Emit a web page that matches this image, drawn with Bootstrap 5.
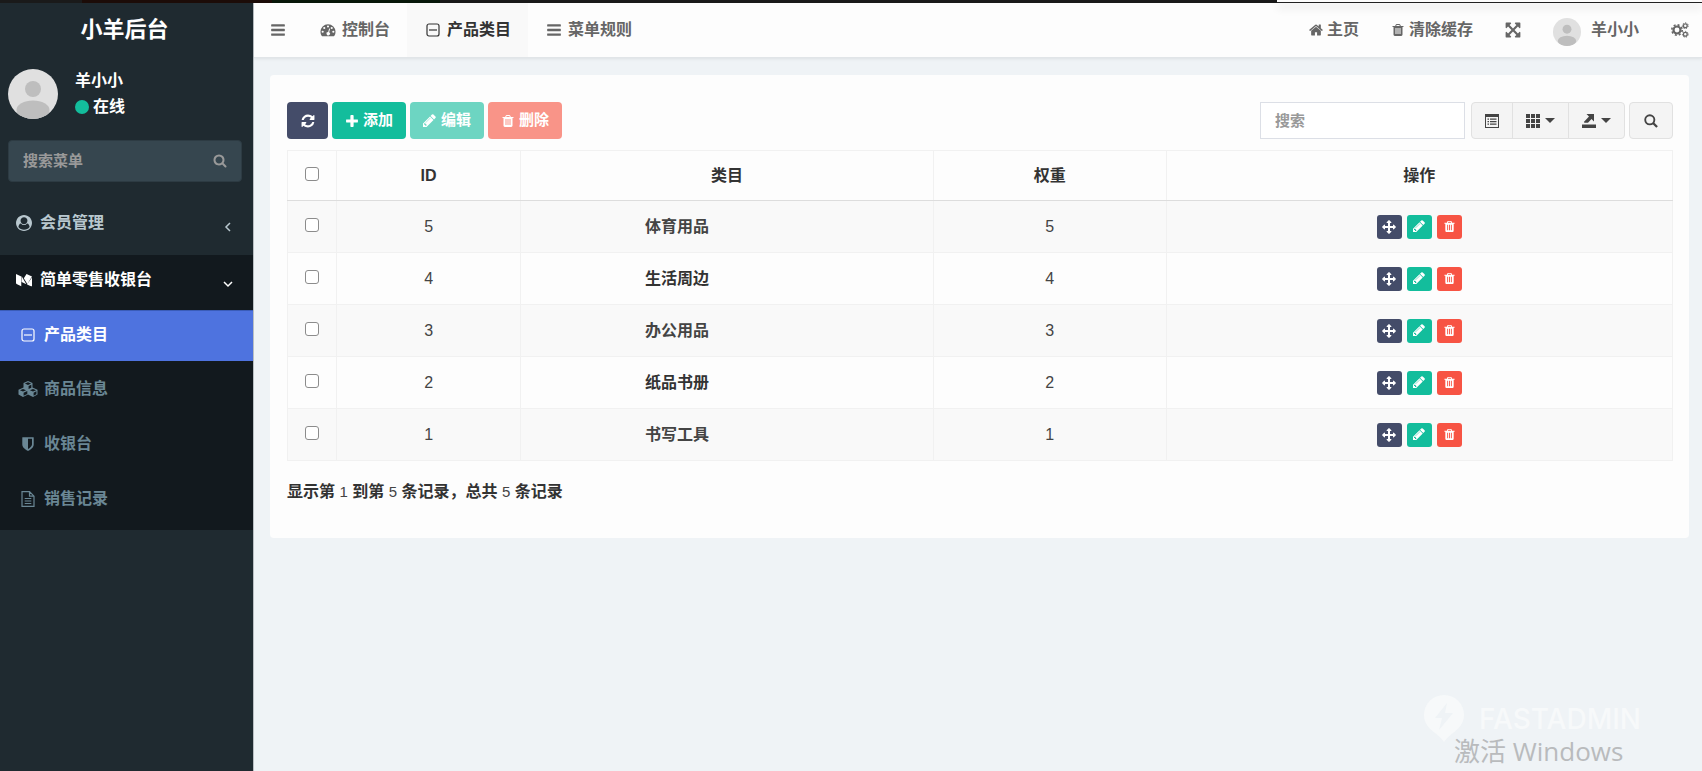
<!DOCTYPE html>
<html lang="zh-CN">
<head>
<meta charset="utf-8">
<meta name="viewport" content="width=device-width, initial-scale=1">
<title>小羊后台</title>
<link href="https://cdn.jsdelivr.net/npm/bootstrap@5.3.0/dist/css/bootstrap.min.css" rel="stylesheet">
<style>
  body { font-family: "Liberation Sans", "Noto Sans CJK SC", sans-serif; font-size: 16px; line-height: 24px; background: #eff3f6; color: #333; }
  a { text-decoration: none; color: inherit; }
  .ico { width: 16px; height: 16px; fill: currentColor; flex: none; }
  .ico-sm { width: 14px; height: 14px; }

  .window-edge { height: 3px; background: linear-gradient(90deg, #1a1a1a 82px, #1c0c08 82px 272px, #08180a 272px 440px, #1a1a1a 440px); }
  .window-edge > div { width: 25%; background: #fdfdfd; border-bottom: 1px solid #222; box-shadow: 0 5px 8px rgba(0,0,0,.12); position: relative; }

  .sidebar { width: 254px; background: #1f2a30; border-right: 1px solid #b9bfc3; font-weight: 700; color: #fff; }
  .brand { height: 54px; font-size: 22px; }
  .user-panel { padding: 12px 8px; gap: 17px; }
  .user-panel svg { width: 50px; height: 50px; border-radius: 50%; }
  .status { gap: 4px; margin-top: 2px; }
  .status-dot { width: 14px; height: 14px; border-radius: 50%; background: #13bd9c; }
  .menu-search { margin: 9px 11px 9px 8px; height: 42px; background: #36464f; border: 1px solid #2d3b43; border-radius: 4px; color: #999; padding-right: 14px; }
  .menu-search input { font-size: 15px; font-weight: 700; color: #ccc; padding: 0 14px; background: none; }
  .menu-search input::placeholder, .table-search::placeholder { color: #999; opacity: 1; }
  .menu-search button, .plain-btn { background: none; border: 0; padding: 0; color: inherit; display: flex; }
  .menu-top { height: 64px; padding: 0 18px 0 16px; gap: 8px; color: #b8c7ce; }
  .menu-open { background: #12191e; padding-bottom: 4px; }
  .menu-open .menu-top { height: 55px; color: #fff; padding-bottom: 5px; }
  .chevron { width: 14px; height: 14px; margin-top: 8px; }
  .menu-sub { height: 55px; padding: 0 20px 0 18px; gap: 6px; color: #6a8795; }
  .menu-sub .ico { width: 20px; }
  .menu-sub.active { height: 51px; background: #4e73df; color: #fff; border-top: 1px solid #3a5cb8; padding-bottom: 2px; }

  .topbar { height: 55px; background: #fdfdfd; border-bottom: 1px solid #e1e5e8; box-shadow: 0 1px 3px rgba(0,0,0,.08); color: #666; font-weight: 700; }
  .top-item { padding: 0 16px; gap: 4px; height: 54px; }
  .top-toggle { padding: 0 16px; }
  .top-tab { padding: 0 17px 0 18px; gap: 6px; }
  .top-tab.active { background: #f9f9f9; color: #333; }
  .top-avatar { width: 28px; height: 28px; margin: 3px 6px 0 0; border-radius: 50%; }
  .top-end { padding-right: 13px; }
  .ico-wide { width: 18px; }

  .panel { margin: 17px 13px 0 16px; padding: 27px 16px 34px 17px; background: #fdfdfd; border-radius: 4px; }
  .tools { gap: 4px; }
  .tool { height: 37px; padding: 0 13px; gap: 4px; font-size: 15px; font-weight: 700; color: #fff; border: 0; border-radius: 4px; display: flex; align-items: center; }
  .tool:hover { color: #fff; }
  .tool:disabled { color: #fff; opacity: 1; }
  .tool-icon { width: 41px; justify-content: center; }
  .tone-navy { background: #444c69; } .tone-green { background: #13bd9c; } .tone-red { background: #f75444; }
  .tone-green:disabled { background: #6dd5c2; } .tone-red:disabled { background: #f99488; }
  .table-search { width: 205px; height: 37px; border: 1px solid #dcdfe6; border-radius: 0; font-size: 15px; font-weight: 700; padding: 0 14px; background: #fff; margin-right: 2px; }
  .tool-grey { height: 37px; padding: 0 13px; background: #f4f4f4; border: 1px solid #e1e1e1; color: #444; border-radius: 4px; display: flex; align-items: center; gap: 5px; }
  .tool-find { padding: 0 14px; }
  .caret { border: 5px solid transparent; border-top-color: #444; border-bottom: 0; width: 0; }

  .data-table { margin: 11px 0 0; table-layout: fixed; border-color: #f1f1f1; text-align: center; color: #444; --bs-table-bg: transparent; --bs-table-striped-bg: #f9f9f9; --bs-table-striped-color: #444; --bs-table-color: #444; }
  .data-table > :not(caption) > * > * { padding: 0; vertical-align: middle; border-color: #f1f1f1; height: 52px; }
  .data-table > thead > tr > * { height: 50px; color: #333; border-bottom: 1px solid #ddd; }
  .data-table > tbody .name { font-weight: 700; color: #333; padding-right: 100px; }
  .c-check { width: 49px; } .c-id { width: 13.3%; } .c-name { width: 29.8%; } .c-weight { width: 16.8%; }
  .row-check { width: 14px; height: 14px; display: block; margin: 0 auto 4px; appearance: none; border: 1px solid #8c8c8c; border-radius: 3px; background: #fff; }
  .row-check:checked { background: #4e73df; }
  .row-tools { gap: 5px; }
  .row-tools button { width: 25px; height: 24px; padding: 0; border: 0; border-radius: 3px; color: #fff; display: flex; align-items: center; justify-content: center; }
  .row-tools .ico { width: 13px; height: 13px; }
  .row-tools .tone-navy .ico { width: 14px; height: 14px; }
  .summary { margin: 19px 0 0; font-weight: 700; }
  .summary span { font-weight: 400; font-size: 15px; color: #444; }

  .watermarks { right: 0; bottom: 6px; width: 290px; pointer-events: none; }
  .mark-logo { color: #f7f9fa; font-family: Inter, sans-serif; font-weight: 500; font-size: 28px; gap: 15px; padding-left: 12px; }
  .mark-logo svg { width: 40px; height: 48px; }
  .mark-win { font-family: "Open Sans", "Noto Sans CJK SC", sans-serif; font-weight: 400; font-size: 26px; line-height: 28px; color: #b9bbbd; padding-left: 42px; margin-top: -6px; }
</style>
</head>
<body class="d-flex flex-column min-vh-100 position-relative">

<svg class="d-none" aria-hidden="true">
  <symbol id="i-bars" viewBox="0 0 1792 1792"><path d="M1664 1344v128q0 26-19 45t-45 19h-1408q-26 0-45-19t-19-45v-128q0-26 19-45t45-19h1408q26 0 45 19t19 45zm0-512v128q0 26-19 45t-45 19h-1408q-26 0-45-19t-19-45v-128q0-26 19-45t45-19h1408q26 0 45 19t19 45zm0-512v128q0 26-19 45t-45 19h-1408q-26 0-45-19t-19-45v-128q0-26 19-45t45-19h1408q26 0 45 19t19 45z"/></symbol>
  <symbol id="i-trash" viewBox="128 0 1536 1792"><path d="M704 1376v-704q0-14-9-23t-23-9h-64q-14 0-23 9t-9 23v704q0 14 9 23t23 9h64q14 0 23-9t9-23zm256 0v-704q0-14-9-23t-23-9h-64q-14 0-23 9t-9 23v704q0 14 9 23t23 9h64q14 0 23-9t9-23zm256 0v-704q0-14-9-23t-23-9h-64q-14 0-23 9t-9 23v704q0 14 9 23t23 9h64q14 0 23-9t9-23zm-544-992h448l-48-117q-7-9-17-11h-317q-10 2-17 11zm928 32v64q0 14-9 23t-23 9h-96v948q0 83-47 143.5t-113 60.5h-832q-66 0-113-58.5t-47-141.5v-952h-96q-14 0-23-9t-9-23v-64q0-14 9-23t23-9h309l70-167q15-37 54-63t79-26h320q40 0 79 26t54 63l70 167h309q14 0 23 9t9 23z"/></symbol>
  <symbol id="i-pencil" viewBox="128 128 1664 1664"><path d="M491 1536l91-91-235-235-91 91v107h128v128h107zm523-928q0-22-22-22-10 0-17 7l-542 542q-7 7-7 17 0 22 22 22 10 0 17-7l542-542q7-7 7-17zm-54-192l416 416-832 832h-416v-416zm683 96q0 53-37 90l-166 166-416-416 166-165q36-38 90-38 53 0 91 38l235 234q37 39 37 91z"/></symbol>
  <symbol id="i-plus" viewBox="64 0 1664 1664"><path d="M1600 736v192q0 40-28 68t-68 28h-416v416q0 40-28 68t-68 28h-192q-40 0-68-28t-28-68v-416h-416q-40 0-68-28t-28-68v-192q0-40 28-68t68-28h416v-416q0-40 28-68t68-28h192q40 0 68 28t28 68v416h416q40 0 68 28t28 68z"/></symbol>
  <symbol id="i-refresh" viewBox="64 64 1664 1664"><path d="M1639 1056q0 5-1 7-64 268-268 434.5t-478 166.5q-146 0-282.5-55t-243.5-157l-129 129q-19 19-45 19t-45-19-19-45v-448q0-26 19-45t45-19h448q26 0 45 19t19 45-19 45l-137 137q71 66 161 102t187 36q134 0 250-65t186-179q11-17 53-117 8-23 30-23h192q13 0 22.5 9.5t9.5 22.5zm25-800v448q0 26-19 45t-45 19h-448q-26 0-45-19t-19-45 19-45l138-138q-148-137-349-137-134 0-250 65t-186 179q-11 17-53 117-8 23-30 23h-199q-13 0-22.5-9.5t-9.5-22.5v-7q65-268 270-434.5t480-166.5q146 0 284 55.5t245 156.5l130-129q19-19 45-19t45 19 19 45z"/></symbol>
  <symbol id="i-search" viewBox="0 64 1792 1792"><path d="M1216 832q0-185-131.5-316.5t-316.5-131.5-316.5 131.5-131.5 316.5 131.5 316.5 316.5 131.5 316.5-131.5 131.5-316.5zm512 832q0 52-38 90t-90 38q-54 0-90-38l-343-342q-179 124-399 124-143 0-273.5-55.5t-225-150-150-225-55.5-273.5 55.5-273.5 150-225 225-150 273.5-55.5 273.5 55.5 225 150 150 225 55.5 273.5q0 220-124 399l343 343q37 37 37 90z"/></symbol>
  <symbol id="i-move" viewBox="0 0 1792 1792"><path d="M1792 896q0 26-19 45l-256 256q-19 19-45 19t-45-19-19-45v-128h-384v384h128q26 0 45 19t19 45-19 45l-256 256q-19 19-45 19t-45-19l-256-256q-19-19-19-45t19-45 45-19h128v-384h-384v128q0 26-19 45t-45 19-45-19l-256-256q-19-19-19-45t19-45l256-256q19-19 45-19t45 19 19 45v128h384v-384h-128q-26 0-45-19t-19-45 19-45l256-256q19-19 45-19t45 19l256 256q19 19 19 45t-19 45-45 19h-128v384h384v-128q0-26 19-45t45-19 45 19l256 256q19 19 19 45z"/></symbol>
  <symbol id="i-expand" viewBox="64 64 1664 1664"><path d="M1411 541l-355 355 355 355 144-144q29-31 70-14 39 17 39 59v448q0 26-19 45t-45 19h-448q-42 0-59-40-17-39 14-69l144-144-355-355-355 355 144 144q31 30 14 69-17 40-59 40h-448q-26 0-45-19t-19-45v-448q0-42 40-59 39-17 69 14l144 144 355-355-355-355-144 144q-19 19-45 19-12 0-24-5-40-17-40-59v-448q0-26 19-45t45-19h448q42 0 59 40 17 39-14 69l-144 144 355 355 355-355-144-144q-31-30-14-69 17-40 59-40h448q26 0 45 19t19 45v448q0 42-39 59-13 5-25 5-26 0-45-19z"/></symbol>
  <symbol id="i-home" viewBox="64 64 1664 1664"><path d="M1472 992v480q0 26-19 45t-45 19h-384v-384h-256v384h-384q-26 0-45-19t-19-45v-480q0-1 .5-3t.5-3l575-474 575 474q1 2 1 6zm223-69l-62 74q-8 9-21 11h-3q-13 0-21-7l-692-577-692 577q-12 8-24 7-13-2-21-11l-62-74q-8-10-7-23.5t11-21.5l719-599q32-26 76-26t76 26l244 204v-195q0-14 9-23t23-9h192q14 0 23 9t9 23v408l219 182q10 8 11 21.5t-7 23.5z"/></symbol>
  <symbol id="i-shield" viewBox="0 0 1792 1792"><path d="M1344 960v-640h-448v1137q119-63 213-137 235-184 235-360zm192-768v768q0 86-33.5 170.5t-83 150-118 127.5-126.5 103-121 77.5-89.5 49.5-42.5 20q-12 6-26 6t-26-6q-16-7-42.5-20t-89.5-49.5-121-77.5-126.5-103-118-127.5-83-150-33.5-170.5v-768q0-26 19-45t45-19h1152q26 0 45 19t19 45z"/></symbol>
  <symbol id="i-gauge" viewBox="0 0 18 16"><path fill-rule="evenodd" d="M9 1.500a8.500 8.500 0 0 1 8.500 8.500c0 1.700-.5 3.200-1.300 4.500-.1.300-.4.500-.7.500h-13c-.3 0-.6-.2-.7-.5A8.400 8.400 0 0 1 .5 10 8.500 8.500 0 0 1 9 1.500zM3 8.800a1.200 1.200 0 1 0 0 2.400 1.200 1.200 0 0 0 0-2.400zM4.800 4.600a1.200 1.200 0 1 0 0 2.400 1.200 1.200 0 0 0 0-2.400zM9 2.800a1.200 1.200 0 1 0 0 2.400 1.200 1.200 0 0 0 0-2.400zM13.200 4.600a1.200 1.200 0 1 0 0 2.400 1.200 1.200 0 0 0 0-2.400zM15 8.800a1.200 1.200 0 1 0 0 2.400 1.200 1.200 0 0 0 0-2.400zM10.300 6.200 9.200 10.200A1.900 1.900 0 1 0 10.300 10.500L11.400 6.500z"/></symbol>
  <symbol id="i-square" viewBox="0 0 16 16"><rect x="2" y="2" width="12" height="12" rx="2" fill="none" stroke="currentColor" stroke-width="1.200"/><path d="M4 7.400h8v1.200H4z"/></symbol>
  <symbol id="i-user" viewBox="0 0 1792 1792"><path d="M1523 1339q-22-155-87.500-257.500t-184.500-118.500q-67 74-159.500 115.500t-195.500 41.500-195.500-41.500-159.500-115.500q-119 16-184.500 118.500t-87.500 257.500q106 150 271 237.500t356 87.500 356-87.500 271-237.500zm-243-699q0-159-112.500-271.500t-271.500-112.500-271.500 112.500-112.500 271.500 112.500 271.500 271.500 112.500 271.500-112.500 112.500-271.500zm512 256q0 182-71 347.500t-190.500 286-285.500 191.500-349 71q-182 0-348-71t-286-191-191-286-71-348 71-348 191-286 286-191 348-71 348 71 286 191 191 286 71 348z"/></symbol>
  <symbol id="i-medium" viewBox="0 0 17 16"><path d="M0 1.500 5.600 4.200V14.700L.6 12.300Q0 12 0 11.300zM6 4 11 12.400 6 10zM11.200 1.500 17 4.200 12 12.200 8.300 6.200zM11.700 12.900 17 5.300V14q0 1-1 .6z"/></symbol>
  <symbol id="i-cubes" viewBox="0 0 20 16"><path fill-rule="evenodd" d="M10 0l4.500 1.900v4.600L19.500 8.800v4.700L15 15.900l-5-2.300-5 2.300-4.500-2.400V8.800l5-2.300V1.900zM10 1.200 6.900 2.500 10 3.900l3.100-1.400zM10.600 5v3.100l2.700-1.300V3.800zM5 7.900 1.900 9.200 5 10.600l3.100-1.400zM5.600 11.700v3l3.700-1.800V10zM15 7.900l-3.100 1.300 3.100 1.400 3.100-1.400zM15.600 11.700v3l2.800-1.500v-2.900z"/></symbol>
  <symbol id="i-file" viewBox="0 0 16 16"><path d="M2 .7h7.500l4.500 4.500v10.100H2zM9.500.7v4.500H14M4.700 7.500h6.600M4.700 10h6.600M4.700 12.500h6.600" fill="none" stroke="currentColor" stroke-width="1.200"/></symbol>
  <symbol id="i-cogs" viewBox="0 0 18 16"><circle cx="6" cy="8" r="3.500" fill="none" stroke="currentColor" stroke-width="2.200"/><circle cx="6" cy="8" r="5.200" fill="none" stroke="currentColor" stroke-width="1.600" stroke-dasharray="2 2.080"/><g fill="none" stroke="currentColor"><circle cx="14.300" cy="3.700" r="1.900" stroke-width="1.300"/><circle cx="14.300" cy="3.700" r="2.900" stroke-width="1" stroke-dasharray="1.300 1.300"/><circle cx="14.300" cy="12.300" r="1.900" stroke-width="1.300"/><circle cx="14.300" cy="12.300" r="2.900" stroke-width="1" stroke-dasharray="1.300 1.300"/></g></symbol>
  <symbol id="i-list" viewBox="0 0 14 14"><path fill-rule="evenodd" d="M0 0h14v14H0zM1 3v10h12V3zM2.500 4.500H4v1.300H2.500zM5 4.500h6.500v1.300H5zM2.500 7H4v1.300H2.500zM5 7h6.500v1.300H5zM2.500 9.500H4v1.300H2.500zM5 9.500h6.500v1.300H5z"/></symbol>
  <symbol id="i-grid" viewBox="0 0 14 14"><path d="M0 0h4v4H0zM5 0h4v4H5zM10 0h4v4h-4zM0 5h4v4H0zM5 5h4v4H5zM10 5h4v4h-4zM0 10h4v4H0zM5 10h4v4H5zM10 10h4v4h-4z"/></symbol>
  <symbol id="i-export" viewBox="0 0 14 14"><path d="M0 10.500h14V14H0zM4.500 0H12v7.500L9.500 5 6 8.800H2.500L1.800 8 7 2.500z"/></symbol>
  <symbol id="i-zoom" viewBox="0 0 15 15"><circle cx="6.200" cy="6.200" r="4.900" fill="none" stroke="currentColor" stroke-width="2"/><path d="M9.700 9.700 14 14" stroke="currentColor" stroke-width="2.400"/></symbol>
  <symbol id="i-left" viewBox="0 0 14 14"><path d="M9 3 5 7l4 4" fill="none" stroke="currentColor" stroke-width="1.500"/></symbol>
  <symbol id="i-down" viewBox="0 0 14 14"><path d="M3 5l4 4 4-4" fill="none" stroke="currentColor" stroke-width="1.500"/></symbol>
  <symbol id="i-avatar" viewBox="0 0 50 50"><path fill="#e0e0e0" d="M0 0h50v50H0z"/><circle cx="25" cy="20" r="8" fill="#bebebe"/><ellipse cx="25" cy="41" rx="16.500" ry="9.500" fill="#bebebe"/></symbol>
</svg>

<div class="window-edge d-flex justify-content-end"><div></div></div>

<div class="d-flex flex-grow-1">
  <aside class="sidebar flex-shrink-0">
    <a href="#" class="brand d-flex align-items-center justify-content-center pe-1">小羊后台</a>
    <div class="user-panel d-flex">
      <svg aria-hidden="true"><use href="#i-avatar"/></svg>
      <div>
        <div>羊小小</div>
        <div class="status d-flex align-items-center"><span class="status-dot"></span>在线</div>
      </div>
    </div>
    <form class="menu-search d-flex align-items-center">
      <input type="text" class="form-control border-0 shadow-none flex-grow-1" placeholder="搜索菜单" aria-label="搜索菜单">
      <button type="button" aria-label="搜索"><svg class="ico ico-sm"><use href="#i-search"/></svg></button>
    </form>
    <nav>
      <a href="#" class="menu-top d-flex align-items-center"><svg class="ico"><use href="#i-user"/></svg>会员管理<svg class="ico chevron ms-auto"><use href="#i-left"/></svg></a>
      <div class="menu-open">
        <a href="#" class="menu-top d-flex align-items-center"><svg class="ico"><use href="#i-medium"/></svg>简单零售收银台<svg class="ico chevron ms-auto"><use href="#i-down"/></svg></a>
        <a href="#" class="menu-sub active d-flex align-items-center"><svg class="ico"><use href="#i-square"/></svg>产品类目</a>
        <a href="#" class="menu-sub d-flex align-items-center"><svg class="ico"><use href="#i-cubes"/></svg>商品信息</a>
        <a href="#" class="menu-sub d-flex align-items-center"><svg class="ico"><use href="#i-shield"/></svg>收银台</a>
        <a href="#" class="menu-sub d-flex align-items-center"><svg class="ico"><use href="#i-file"/></svg>销售记录</a>
      </div>
    </nav>
  </aside>

  <div class="flex-grow-1">
    <header class="topbar d-flex">
      <button type="button" class="plain-btn top-item top-toggle align-items-center" aria-label="切换菜单"><svg class="ico"><use href="#i-bars"/></svg></button>
      <a href="#" class="top-item top-tab d-flex align-items-center"><svg class="ico"><use href="#i-gauge"/></svg>控制台</a>
      <a href="#" class="top-item top-tab active d-flex align-items-center"><svg class="ico"><use href="#i-square"/></svg>产品类目</a>
      <a href="#" class="top-item top-tab d-flex align-items-center"><svg class="ico"><use href="#i-bars"/></svg>菜单规则</a>
      <a href="#" class="top-item d-flex align-items-center ms-auto"><svg class="ico ico-sm"><use href="#i-home"/></svg>主页</a>
      <a href="#" class="top-item d-flex align-items-center"><svg class="ico ico-sm"><use href="#i-trash"/></svg>清除缓存</a>
      <button type="button" class="plain-btn top-item align-items-center" aria-label="全屏"><svg class="ico"><use href="#i-expand"/></svg></button>
      <a href="#" class="top-item d-flex align-items-center"><svg class="top-avatar" aria-hidden="true"><use href="#i-avatar"/></svg>羊小小</a>
      <button type="button" class="plain-btn top-item top-end align-items-center" aria-label="设置"><svg class="ico ico-wide"><use href="#i-cogs"/></svg></button>
    </header>

    <main class="panel">
      <div class="tools d-flex">
        <button type="button" class="btn tool tool-icon tone-navy" aria-label="刷新"><svg class="ico ico-sm"><use href="#i-refresh"/></svg></button>
        <button type="button" class="btn tool tone-green"><svg class="ico ico-sm"><use href="#i-plus"/></svg>添加</button>
        <button type="button" class="btn tool tone-green" disabled><svg class="ico ico-sm"><use href="#i-pencil"/></svg>编辑</button>
        <button type="button" class="btn tool tone-red" disabled><svg class="ico ico-sm"><use href="#i-trash"/></svg>删除</button>
        <input type="search" class="form-control table-search ms-auto" placeholder="搜索" aria-label="搜索">
        <div class="btn-group">
          <button type="button" class="btn tool-grey" aria-label="切换视图"><svg class="ico ico-sm"><use href="#i-list"/></svg></button>
          <button type="button" class="btn tool-grey" aria-label="列"><svg class="ico ico-sm"><use href="#i-grid"/></svg><span class="caret"></span></button>
          <button type="button" class="btn tool-grey" aria-label="导出"><svg class="ico ico-sm"><use href="#i-export"/></svg><span class="caret"></span></button>
        </div>
        <button type="button" class="btn tool-grey tool-find" aria-label="高级搜索"><svg class="ico ico-sm"><use href="#i-zoom"/></svg></button>
      </div>

      <table class="table table-bordered table-striped data-table">
        <thead>
          <tr><th class="c-check"><input type="checkbox" class="row-check" aria-label="全选"></th><th class="c-id">ID</th><th class="c-name">类目</th><th class="c-weight">权重</th><th>操作</th></tr>
        </thead>
        <tbody>
          <tr><td><input type="checkbox" class="row-check" aria-label="选择 5"></td><td>5</td><td class="name">体育用品</td><td>5</td><td><div class="row-tools d-flex justify-content-center"><button type="button" class="tone-navy" aria-label="拖动"><svg class="ico"><use href="#i-move"/></svg></button><button type="button" class="tone-green" aria-label="编辑"><svg class="ico"><use href="#i-pencil"/></svg></button><button type="button" class="tone-red" aria-label="删除"><svg class="ico"><use href="#i-trash"/></svg></button></div></td></tr>
          <tr><td><input type="checkbox" class="row-check" aria-label="选择 4"></td><td>4</td><td class="name">生活周边</td><td>4</td><td><div class="row-tools d-flex justify-content-center"><button type="button" class="tone-navy" aria-label="拖动"><svg class="ico"><use href="#i-move"/></svg></button><button type="button" class="tone-green" aria-label="编辑"><svg class="ico"><use href="#i-pencil"/></svg></button><button type="button" class="tone-red" aria-label="删除"><svg class="ico"><use href="#i-trash"/></svg></button></div></td></tr>
          <tr><td><input type="checkbox" class="row-check" aria-label="选择 3"></td><td>3</td><td class="name">办公用品</td><td>3</td><td><div class="row-tools d-flex justify-content-center"><button type="button" class="tone-navy" aria-label="拖动"><svg class="ico"><use href="#i-move"/></svg></button><button type="button" class="tone-green" aria-label="编辑"><svg class="ico"><use href="#i-pencil"/></svg></button><button type="button" class="tone-red" aria-label="删除"><svg class="ico"><use href="#i-trash"/></svg></button></div></td></tr>
          <tr><td><input type="checkbox" class="row-check" aria-label="选择 2"></td><td>2</td><td class="name">纸品书册</td><td>2</td><td><div class="row-tools d-flex justify-content-center"><button type="button" class="tone-navy" aria-label="拖动"><svg class="ico"><use href="#i-move"/></svg></button><button type="button" class="tone-green" aria-label="编辑"><svg class="ico"><use href="#i-pencil"/></svg></button><button type="button" class="tone-red" aria-label="删除"><svg class="ico"><use href="#i-trash"/></svg></button></div></td></tr>
          <tr><td><input type="checkbox" class="row-check" aria-label="选择 1"></td><td>1</td><td class="name">书写工具</td><td>1</td><td><div class="row-tools d-flex justify-content-center"><button type="button" class="tone-navy" aria-label="拖动"><svg class="ico"><use href="#i-move"/></svg></button><button type="button" class="tone-green" aria-label="编辑"><svg class="ico"><use href="#i-pencil"/></svg></button><button type="button" class="tone-red" aria-label="删除"><svg class="ico"><use href="#i-trash"/></svg></button></div></td></tr>
        </tbody>
      </table>
      <p class="summary">显示第 <span>1</span> 到第 <span>5</span> 条记录，总共 <span>5</span> 条记录</p>
    </main>
  </div>
</div>

<div class="watermarks position-absolute">
  <div class="mark-logo d-flex align-items-center"><svg viewBox="0 0 40 48" aria-hidden="true"><path fill="currentColor" fill-rule="evenodd" d="M20 0a20 20 0 0 1 20 20c0 9-6 14-11 18-4 3-7 6-9 9-2-3-5-6-9-9C6 34 0 29 0 20A20 20 0 0 1 20 0zM23 8 11 23h7l-3 12 14-17h-8z"/></svg>FASTADMIN</div>
  <div class="mark-win">激活 Windows</div>
</div>

<script src="https://cdn.jsdelivr.net/npm/bootstrap@5.3.0/dist/js/bootstrap.bundle.min.js"></script>
</body>
</html>
